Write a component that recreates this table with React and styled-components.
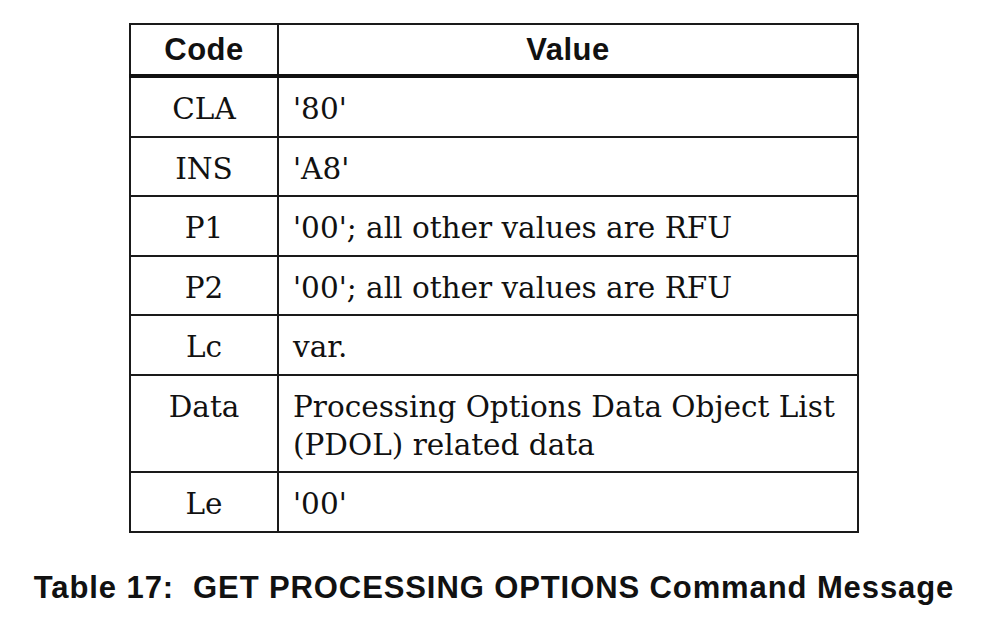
import styled, { createGlobalStyle } from "styled-components";

const GlobalStyle = createGlobalStyle`
	html, body {
		margin: 0;
		padding: 0;
		background: #ffffff;
	}
`;

const rows = [
	{ code: "CLA", value: ["'80'"] },
	{ code: "INS", value: ["'A8'"] },
	{ code: "P1", value: ["'00'; all other values are RFU"] },
	{ code: "P2", value: ["'00'; all other values are RFU"] },
	{ code: "Lc", value: ["var."] },
	{ code: "Data", value: ["Processing Options Data Object List", "(PDOL) related data"] },
	{ code: "Le", value: ["'00'"] },
];

export default function App() {
	return (
		<Page>
			<GlobalStyle />
			<Table>
				<thead>
					<tr>
						<HeadCell $width={146}>Code</HeadCell>
						<HeadCell>Value</HeadCell>
					</tr>
				</thead>
				<tbody>
					{rows.map((row) => (
						<tr key={row.code}>
							<CodeCell>{row.code}</CodeCell>
							<ValueCell>
								{row.value.map((line) => (
									<div key={line}>{line}</div>
								))}
							</ValueCell>
						</tr>
					))}
				</tbody>
			</Table>
			<Caption>Table 17:&nbsp; GET PROCESSING OPTIONS Command Message</Caption>
		</Page>
	);
}

const Page = styled.div`
	display: flex;
	flex-direction: column;
	align-items: center;
	padding-top: 23px;
	color: #111;
`;

const Table = styled.table`
	width: 730px;
	border-collapse: collapse;
	border: 2px solid #1a1a1a;
	table-layout: fixed;
`;

const HeadCell = styled.th`
	width: ${({ $width }) => ($width ? `${$width}px` : "auto")};
	height: 49px;
	padding: 0;
	border: 2px solid #1a1a1a;
	border-bottom: 4px solid #111;
	font-family: "Liberation Sans", Arial, sans-serif;
	font-weight: bold;
	font-size: 31px;
	letter-spacing: 0.5px;
	text-align: center;
	vertical-align: middle;
`;

const Cell = styled.td`
	border: 2px solid #1a1a1a;
	padding: 12px 14px 7.5px 14px;
	font-family: "DejaVu Serif", serif;
	font-size: 29.5px;
	line-height: 38px;
	vertical-align: top;
`;

const CodeCell = styled(Cell)`
	text-align: center;
`;

const ValueCell = styled(Cell)`
	text-align: left;
`;

const Caption = styled.div`
	margin-top: 37px;
	font-family: "Liberation Sans", Arial, sans-serif;
	font-weight: bold;
	font-size: 31px;
	letter-spacing: 0.9px;
	white-space: pre;
`;
